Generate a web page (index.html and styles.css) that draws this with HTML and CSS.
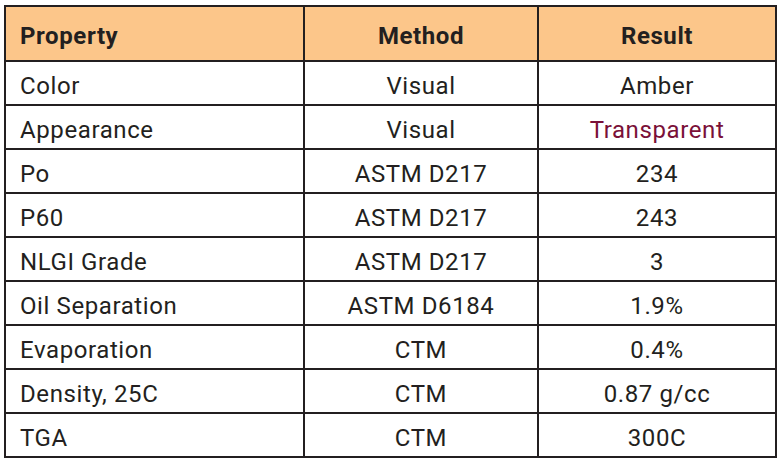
FILE: index.html
```html
<!DOCTYPE html>
<html>
<head>
<meta charset="utf-8">
<link rel="stylesheet" href="styles.css">
</head>
<body>
<table class="spec">
  <colgroup><col class="c1"><col class="c2"><col class="c3"></colgroup>
  <thead>
    <tr><th class="left">Property</th><th>Method</th><th>Result</th></tr>
  </thead>
  <tbody>
    <tr><td class="left">Color</td><td>Visual</td><td>Amber</td></tr>
    <tr><td class="left">Appearance</td><td>Visual</td><td class="accent">Transparent</td></tr>
    <tr><td class="left">Po</td><td>ASTM D217</td><td>234</td></tr>
    <tr><td class="left">P60</td><td>ASTM D217</td><td>243</td></tr>
    <tr><td class="left">NLGI Grade</td><td>ASTM D217</td><td>3</td></tr>
    <tr><td class="left">Oil Separation</td><td>ASTM D6184</td><td>1.9%</td></tr>
    <tr><td class="left">Evaporation</td><td>CTM</td><td>0.4%</td></tr>
    <tr><td class="left">Density, 25C</td><td>CTM</td><td>0.87 g/cc</td></tr>
    <tr><td class="left">TGA</td><td>CTM</td><td>300C</td></tr>
  </tbody>
</table>
</body>
</html>
```
FILE: styles.css
```css
html, body { margin: 0; padding: 0; background: #fff; }
body { padding: 5px 0 0 4px; }
.spec {
  border-collapse: collapse;
  width: 771px;
  table-layout: fixed;
  font-family: Roboto, "Liberation Sans", sans-serif;
  font-size: 24px;
  letter-spacing: 0.6px;
  color: #231f20;
}
.c1 { width: 299px; }
.c2 { width: 234px; }
.c3 { width: 238px; }
.spec th, .spec td {
  border: 2px solid #231f20;
  text-align: center;
  padding: 5px 14px 0;
  line-height: 1;
  box-sizing: border-box;
}
.spec th {
  background: #fcc68a;
  font-weight: 700;
  height: 55px;
}
.spec td { height: 44px; }
.spec .left { text-align: left; padding-left: 14px; }
.spec .accent { color: #7a1038; }
```
